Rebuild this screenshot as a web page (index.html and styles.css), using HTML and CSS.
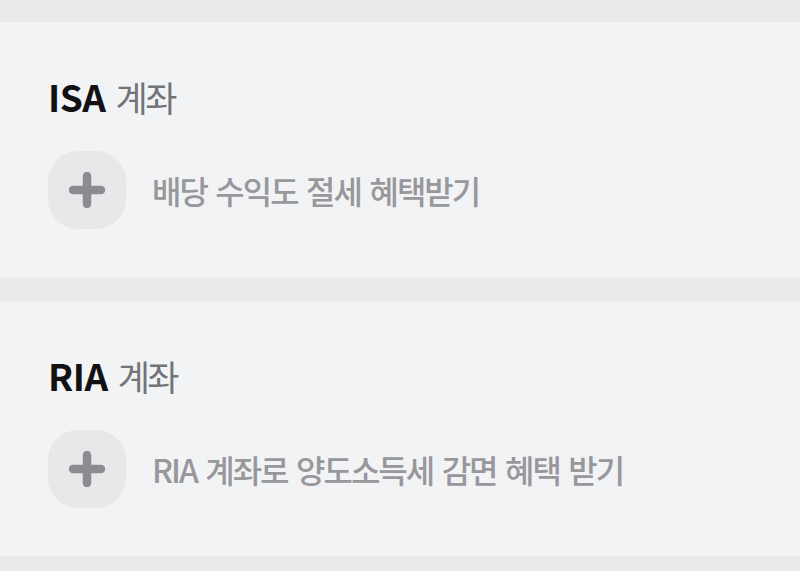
FILE: index.html
```html
<!DOCTYPE html>
<html lang="ko">
<head>
    <meta charset="UTF-8">
    <title>계좌</title>
    <link rel="stylesheet" href="styles.css">
</head>
<body>
<div class="list">
    <div class="card">
        <h2 class="title"><b>ISA</b> <span>계좌</span></h2>
        <div class="row">
            <em class="add">
                <svg width="36" height="36" viewBox="0 0 36 36"><path d="M18 4V32M4 18H32" stroke="#8c8c90" stroke-width="8.5" stroke-linecap="round" fill="none"/></svg>
            </em>
            <span class="txt">배당 수익도 절세 혜택받기</span>
        </div>
    </div>
    <div class="card">
        <h2 class="title"><b>RIA</b> <span>계좌</span></h2>
        <div class="row">
            <em class="add">
                <svg width="36" height="36" viewBox="0 0 36 36"><path d="M18 4V32M4 18H32" stroke="#8c8c90" stroke-width="8.5" stroke-linecap="round" fill="none"/></svg>
            </em>
            <span class="txt">RIA 계좌로 양도소득세 감면 혜택 받기</span>
        </div>
    </div>
</div>
</body>
</html>
```
FILE: styles.css
```css
*{
    margin:0;
    padding:0;
    font-family: "Noto Sans CJK KR", "Noto Sans", sans-serif;
}
body{
    background:#e9eaec;
}
.list{
    padding-top:22px;
}
.card{
    margin-bottom:24px;
    padding:54px 48px 48px;
    background:#f2f3f5;
}
.title{
    display:flex;
    align-items:baseline;
    height:51px;
    line-height:40px;
    font-weight:normal;
}
.title b{
    font-size:37px;
    font-weight:700;
    color:#111113;
    letter-spacing:-0.5px;
}
.title span{
    margin-left:10px;
    font-size:35px;
    color:#737378;
    letter-spacing:-2.5px;
}
.row{
    display:flex;
    align-items:center;
    margin-top:24px;
}
.add{
    display:flex;
    align-items:center;
    justify-content:center;
    width:78px;
    height:78px;
    border-radius:30px;
    background:#e7e8ea;
}
.txt{
    margin-left:26px;
    font-size:32px;
    font-weight:500;
    color:#98989c;
    letter-spacing:-2px;
    word-spacing:1.5px;
}
```
